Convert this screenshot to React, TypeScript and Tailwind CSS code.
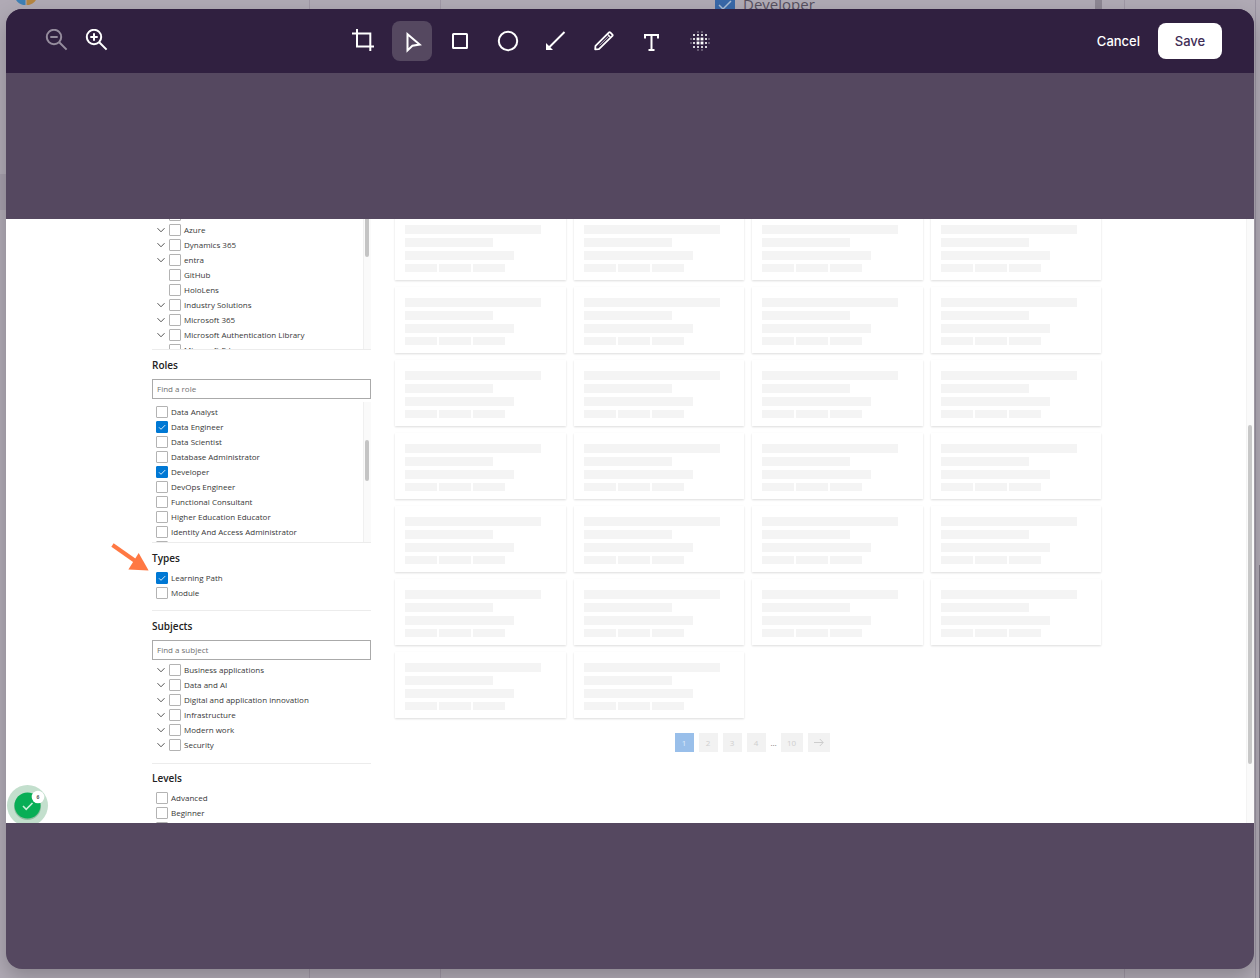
import type { ReactNode } from "react";

type Option = { label: string; checked?: boolean; leaf?: boolean };

const products: Option[] = [
  { label: "ASP.NET" },
  { label: "Azure" },
  { label: "Dynamics 365" },
  { label: "entra" },
  { label: "GitHub", leaf: true },
  { label: "HoloLens", leaf: true },
  { label: "Industry Solutions" },
  { label: "Microsoft 365" },
  { label: "Microsoft Authentication Library" },
  { label: "Microsoft Edge", leaf: true },
];

const roles: Option[] = [
  { label: "Data Analyst" },
  { label: "Data Engineer", checked: true },
  { label: "Data Scientist" },
  { label: "Database Administrator" },
  { label: "Developer", checked: true },
  { label: "DevOps Engineer" },
  { label: "Functional Consultant" },
  { label: "Higher Education Educator" },
  { label: "Identity And Access Administrator" },
  { label: "Security Engineer" },
];

const types: Option[] = [{ label: "Learning Path", checked: true }, { label: "Module" }];

const subjects: Option[] = [
  { label: "Business applications" },
  { label: "Data and AI" },
  { label: "Digital and application innovation" },
  { label: "Infrastructure" },
  { label: "Modern work" },
  { label: "Security" },
];

const levels: Option[] = [{ label: "Advanced" }, { label: "Beginner" }, { label: "Intermediate" }];

function Icon({ children }: { children: ReactNode }) {
  return (
    <svg viewBox="0 0 24 24" className="size-6" fill="none" stroke="currentColor" strokeWidth="2" aria-hidden="true">
      {children}
    </svg>
  );
}

function DotGrid() {
  const inner = [6, 10, 14, 18];
  return (
    <g stroke="none" fill="currentColor">
      {inner.map((y) =>
        inner.map((x) => {
          const big = x > 6 && x < 18 && y > 6 && y < 18;
          const size = big ? 2.8 : 1.8;
          return <rect key={`${x}-${y}`} x={x - size / 2} y={y - size / 2} width={size} height={size} />;
        }),
      )}
      <g opacity="0.25">
        {[10, 14].map((p) => (
          <g key={p}>
            <rect x={p - 1} y="2" width="2" height="2" />
            <rect x={p - 1} y="20" width="2" height="2" />
            <rect x="2" y={p - 1} width="2" height="2" />
            <rect x="20" y={p - 1} width="2" height="2" />
          </g>
        ))}
      </g>
    </g>
  );
}

const tools: { name: string; active?: boolean; art: ReactNode }[] = [
  { name: "Crop", art: <path d="M5 0v17.5h17M0 4.5h18.3V22" /> },
  { name: "Select", active: true, art: <path d="M7.5 5.2v16.2l4.9-4.6 7.3-1.2z" /> },
  { name: "Rectangle", art: <rect x="5" y="5" width="14" height="14" rx="0.5" /> },
  { name: "Ellipse", art: <circle cx="12" cy="12" r="9.2" /> },
  {
    name: "Arrow",
    art: (
      <>
        <path d="M20.5 3L5 18.5" />
        <path d="M2 14v7h7z" fill="currentColor" stroke="none" />
      </>
    ),
  },
  {
    name: "Pencil",
    art: (
      <>
        <path
          d="M3.2 20.4l.3-3.6L17 3.4q.6-.6 1.2 0l2.2 2.2q.6.6 0 1.2L6.9 20.1z"
          strokeWidth="1.8"
          strokeLinejoin="round"
        />
        <path d="M7.5 16.3L17.5 6.3" strokeWidth="1" opacity="0.7" />
        <path d="M15.4 5.2l3.2 3.2" strokeWidth="1.2" />
      </>
    ),
  },
  { name: "Text", art: <path d="M5 9.5V6h13v3.5M11.5 6v15M8.5 21h6" /> },
  { name: "Blur", art: <DotGrid /> },
];

function Toolbar() {
  return (
    <header className="flex h-16 shrink-0 items-center bg-[#302040] pr-8 pl-[30px] text-white">
      <div className="mr-[228px] flex">
        <button aria-label="Zoom out" className="flex size-10 items-center justify-center text-[#958c9d]" disabled>
          <Icon>
            <circle cx="10" cy="8" r="7.2" />
            <path d="M15.2 13.2l7.4 7.4M6.3 8h7.4" />
          </Icon>
        </button>
        <button aria-label="Zoom in" className="flex size-10 items-center justify-center">
          <Icon>
            <circle cx="10" cy="8" r="7.2" />
            <path d="M15.2 13.2l7.4 7.4M6.3 8h7.4M10 4.3v7.4" />
          </Icon>
        </button>
      </div>
      <div className="flex gap-2">
        {tools.map((tool) => (
          <button
            key={tool.name}
            aria-label={tool.name}
            aria-pressed={!!tool.active}
            className={`flex size-10 items-center justify-center rounded-lg ${tool.active ? "bg-[#554860]" : ""}`}
          >
            <Icon>{tool.art}</Icon>
          </button>
        ))}
      </div>
      <div className="ml-auto flex items-center gap-[18px] font-['Inter',sans-serif] text-[13px] font-medium">
        <button className="h-9 pt-[2px]">Cancel</button>
        <button className="h-9 w-16 rounded-lg bg-white pt-[2px] text-[#3f2d56]">Save</button>
      </div>
    </header>
  );
}

function OptionRow({ option, tree }: { option: Option; tree?: boolean }) {
  return (
    <li className="flex h-[15px] items-center gap-[3px] pl-1">
      {tree && (
        <svg viewBox="0 0 10 10" className="size-[10px] shrink-0" fill="none" stroke="#555" aria-hidden="true">
          {!option.leaf && <path d="M1.5 3.2L5 6.8l3.5-3.6" />}
        </svg>
      )}
      <label className="flex items-center gap-[3px]">
        <span className="grid">
          <input
            type="checkbox"
            defaultChecked={option.checked}
            className="peer col-start-1 row-start-1 size-3 appearance-none rounded-[1px] border border-[#b3b3b3] bg-white checked:border-[#0078d4] checked:bg-[#0078d4]"
          />
          <svg
            viewBox="0 0 12 12"
            className="pointer-events-none invisible col-start-1 row-start-1 size-3 peer-checked:visible"
            fill="none"
            stroke="#d6ebfa"
            aria-hidden="true"
          >
            <path d="M3 6.3l2 2 4.2-4.2" />
          </svg>
        </span>
        <span className="whitespace-nowrap">{option.label}</span>
      </label>
    </li>
  );
}

function Options({ items, tree }: { items: Option[]; tree?: boolean }) {
  return (
    <ul>
      {items.map((item) => (
        <OptionRow key={item.label} option={item} tree={tree} />
      ))}
    </ul>
  );
}

function Title({ children }: { children: ReactNode }) {
  return <h2 className="text-[10px] leading-[14px] font-semibold text-[#222]">{children}</h2>;
}

function Search({ label }: { label: string }) {
  return (
    <input
      type="text"
      aria-label={label}
      placeholder={label}
      className="mt-[7px] block h-5 w-full border border-[#aaa] bg-white px-1 pb-[2px] placeholder:text-[#707070]"
    />
  );
}

function Filters() {
  return (
    <aside className="w-[219px] shrink-0 font-['Open_Sans','Noto_Sans',sans-serif] text-[8px] leading-[15px] text-[#383838]">
      <div className="relative -mt-3 h-[143px] overflow-hidden border-b border-[#ececec]">
        <Options items={products} tree />
        <div className="absolute inset-y-0 right-0 w-2 border-l border-[#f0f0f0] bg-[#fafafa]">
          <div className="ml-px h-[50px] w-1 rounded-full bg-[#c4c4c4]" />
        </div>
      </div>
      <section className="pt-2">
        <Title>Roles</Title>
        <Search label="Find a role" />
        <div className="relative mt-[3px] h-[141px] overflow-hidden border-b border-[#ececec] pt-[2px]">
          <Options items={roles} />
          <div className="absolute inset-y-0 right-0 w-2 border-l border-[#f0f0f0] bg-[#fafafa] pt-[38px]">
            <div className="ml-px h-[41px] w-1 rounded-full bg-[#c4c4c4]" />
          </div>
        </div>
      </section>
      <section className="border-b border-[#ececec] pt-2 pb-[10px]">
        <Title>Types</Title>
        <div className="mt-[5px]">
          <Options items={types} />
        </div>
      </section>
      <section className="border-b border-[#ececec] pt-2 pb-[11px]">
        <Title>Subjects</Title>
        <Search label="Find a subject" />
        <div className="mt-[2px]">
          <Options items={subjects} tree />
        </div>
      </section>
      <section className="pt-[7px]">
        <Title>Levels</Title>
        <div className="mt-[5px]">
          <Options items={levels} />
        </div>
      </section>
    </aside>
  );
}

function SkeletonCard() {
  return (
    <div className="flex h-[66px] flex-col gap-1 bg-white pt-[11px] pl-[10px] shadow-[0_1px_2px_rgba(0,0,0,0.14)]">
      <div className="h-[9px] w-[136px] bg-[#f4f4f4]" />
      <div className="h-[9px] w-[88px] bg-[#f4f4f4]" />
      <div className="h-[9px] w-[109px] bg-[#f4f4f4]" />
      <div className="flex gap-[2px]">
        <div className="h-2 w-8 bg-[#f4f4f4]" />
        <div className="h-2 w-8 bg-[#f4f4f4]" />
        <div className="h-2 w-8 bg-[#f4f4f4]" />
      </div>
    </div>
  );
}

function Results() {
  return (
    <main className="mr-[153px] min-w-0 flex-1">
      <div className="-mt-[5px] grid grid-cols-4 gap-x-2 gap-y-[7px]">
        {Array.from({ length: 26 }, (_, i) => (
          <SkeletonCard key={i} />
        ))}
      </div>
      <nav
        aria-label="Pagination"
        className="mt-[15px] flex items-center justify-center gap-[5px] pl-2 font-['Open_Sans',sans-serif] text-[8px] text-[#cfcfcf]"
      >
        <button aria-current="page" className="size-[19px] bg-[#99bfea] text-[#dcebfa]">
          1
        </button>
        <button className="size-[19px] bg-[#f2f2f2]">2</button>
        <button className="size-[19px] bg-[#f2f2f2]">3</button>
        <button className="size-[19px] bg-[#f2f2f2]">4</button>
        <span className="w-[5px] text-center text-[#777]">…</span>
        <button className="h-[19px] w-[22px] bg-[#f2f2f2]">10</button>
        <button aria-label="Next" className="flex h-[19px] w-[22px] items-center justify-center bg-[#f2f2f2]">
          <svg viewBox="0 0 12 10" className="h-[10px] w-3" fill="none" stroke="#cdcdcd" aria-hidden="true">
            <path d="M1 4.5h9M6.8 1l3.4 3.5L6.8 8" />
          </svg>
        </button>
      </nav>
    </main>
  );
}

function Canvas() {
  return (
    <div className="relative flex h-[604px] w-full gap-6 overflow-hidden bg-white pl-[146px]">
      <Filters />
      <Results />
      <div className="absolute inset-y-0 right-0 w-2 border-l border-[#f3f3f3] bg-[#fafafa] pt-[206px]">
        <div className="ml-px h-[339px] w-1 rounded-full bg-[#c8c8c8]" />
      </div>
      <svg className="absolute top-[320px] left-[100px] h-10 w-12" viewBox="0 0 48 40" aria-hidden="true">
        <path d="M6.5 6L30 22.5" stroke="#ff7843" strokeWidth="4" />
        <path d="M32.7 14l9.9 17.6-20.2-1.1z" fill="#ff7843" />
      </svg>
      <svg className="absolute bottom-0 left-0 h-10 w-11" viewBox="0 0 44 40" aria-hidden="true">
        <circle cx="21.5" cy="22.5" r="20.5" fill="#c3dfcd" />
        <circle cx="21.5" cy="23.5" r="13.5" fill="#8fbda0" />
        <circle cx="21.5" cy="22.5" r="13" fill="#08ae56" />
        <path d="M17 23l3.2 3.3 6.3-6.3" fill="none" stroke="#c9f0d8" strokeWidth="1.6" />
        <circle cx="32" cy="14" r="6.3" fill="#fff" />
        <text x="32" y="16" textAnchor="middle" fontSize="5" fontWeight="700" fill="#555" fontFamily="Open Sans, sans-serif">
          6
        </text>
      </svg>
    </div>
  );
}

function Backdrop() {
  return (
    <div className="absolute inset-0 overflow-hidden bg-[#b0aab5]" aria-hidden="true">
      <svg className="absolute -top-[18px] left-[14px] size-6" viewBox="0 0 24 24">
        <path d="M11.5 0a11.5 11.5 0 0 0 0 23z" fill="#3f80b5" />
        <path d="M12.5 0a11.5 11.5 0 0 1 0 23z" fill="#b58642" />
      </svg>
      <div className="absolute inset-y-0 left-[309px] w-px bg-[#9f97a5]" />
      <div className="absolute inset-y-0 left-[440px] w-px bg-[#9f97a5]" />
      <div className="absolute inset-y-0 right-[135px] w-px bg-[#9f97a5]" />
      <div className="absolute inset-y-0 right-1 w-px bg-[#9a93a2]" />
      <div className="absolute top-[565px] right-0 bottom-0 w-px bg-[#7d7784]" />
      <div className="absolute top-[174px] left-0 h-9 w-2 bg-[#a59eab]" />
      <div className="absolute top-0 left-[1095px] h-4 w-[7px] bg-[#8d8793]" />
      <div className="absolute -top-2 left-[715px] flex items-center gap-2">
        <span className="flex size-5 items-center justify-center bg-[#3868a8]">
          <svg viewBox="0 0 20 20" className="size-5" fill="none" stroke="#a9bdd6" strokeWidth="1.5">
            <path d="M4 11l4 4 8-8" />
          </svg>
        </span>
        <span className="font-['Open_Sans',sans-serif] text-[15px] leading-6 text-[#57505f]">Developer</span>
      </div>
    </div>
  );
}

export default function App() {
  return (
    <div className="relative flex min-h-screen px-[6px] py-[9px]">
      <Backdrop />
      <div
        role="dialog"
        aria-label="Edit screenshot"
        className="relative flex w-full flex-col overflow-hidden rounded-2xl bg-[#554860] shadow-[0_8px_20px_rgba(0,0,0,0.22)]"
      >
        <Toolbar />
        <div className="flex flex-1 items-center">
          <Canvas />
        </div>
      </div>
    </div>
  );
}
